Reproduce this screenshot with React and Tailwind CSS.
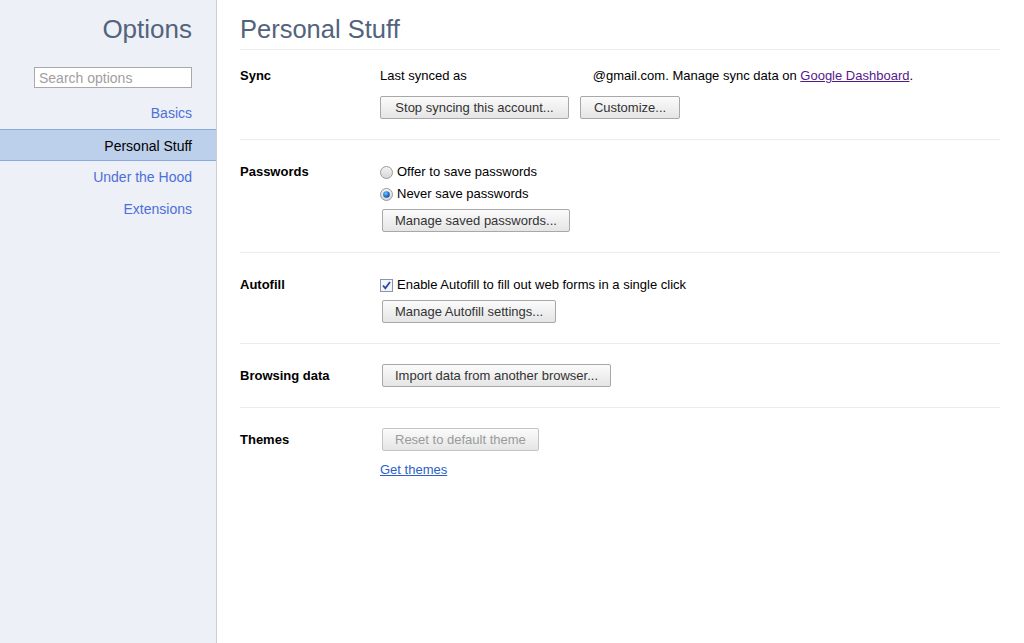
import React from "react";

const Btn = ({ children, disabled, className = "" }) => (
  <button
    className={
      "h-[23px] px-[12px] rounded-[2px] border text-[13px] leading-[21px] whitespace-nowrap bg-gradient-to-b from-[#fbfbfb] to-[#e5e5e5] " +
      (disabled ? "border-[#c4c4c4] text-[#9a9a9a] " : "border-[#a8a8a8] text-[#333] ") +
      className
    }
    style={{ fontFamily: "'Liberation Sans', Arial, sans-serif" }}
  >
    {children}
  </button>
);

const Radio = ({ checked }) => (
  <svg width="13" height="13" viewBox="0 0 13 13" className="shrink-0">
    <defs>
      <linearGradient id={checked ? "rg1" : "rg0"} x1="0" y1="0" x2="0" y2="1">
        <stop offset="0" stopColor="#f4f4f4" />
        <stop offset="1" stopColor="#d6d6d6" />
      </linearGradient>
      <radialGradient id="dot" cx="0.4" cy="0.35" r="0.7">
        <stop offset="0" stopColor="#7fc4ff" />
        <stop offset="0.6" stopColor="#1f74d0" />
        <stop offset="1" stopColor="#0d4a9a" />
      </radialGradient>
    </defs>
    <circle cx="6.5" cy="6.5" r="6" fill={`url(#${checked ? "rg1" : "rg0"})`} stroke="#9a9a9a" strokeWidth="1" />
    {checked && <circle cx="6.5" cy="6.5" r="3.3" fill="url(#dot)" />}
  </svg>
);

const Check = () => (
  <svg width="13" height="13" viewBox="0 0 13 13" className="shrink-0">
    <rect x="0.5" y="0.5" width="12" height="12" fill="#f3f5f8" stroke="#8b97a8" />
    <path d="M3 6.5 L5.3 9.2 L10 3" fill="none" stroke="#2b4aa6" strokeWidth="1.8" />
  </svg>
);

const Section = ({ label, children, pt = "pt-[20px]", border = true }) => (
  <div className={"flex pb-[20px] " + pt + (border ? " border-b border-[#ececec]" : "")}>
    <div className="w-[140px] shrink-0 font-bold text-[13px] pt-[1px] leading-[22px] text-black">{label}</div>
    <div className="flex flex-col">{children}</div>
  </div>
);

export default function App() {
  return (
    <div
      className="flex w-[1024px] h-[643px] bg-white text-[13px] text-black overflow-hidden"
      style={{ fontFamily: "'Liberation Sans', Arial, sans-serif" }}
    >
      {/* Sidebar */}
      <div className="w-[217px] shrink-0 bg-[#eef0f7] border-r border-[#c9ced8] flex flex-col">
        <div className="pr-[24px] pt-[12px] text-right text-[26px] leading-[34px] text-[#53637d]">Options</div>
        <div className="flex justify-end pr-[24px] mt-[21px]">
          <div className="w-[158px] h-[21px] border border-[#a9a9a9] bg-white px-[4px] text-[14px] leading-[20px] text-[#a0a0a0]">
            Search options
          </div>
        </div>
        <div className="mt-[9px] flex flex-col text-[14px]">
          <div className="h-[32px] leading-[33px] text-right pr-[24px] text-[#4c6fd8]">Basics</div>
          <div className="h-[32px] leading-[32px] text-right pr-[24px] text-black bg-[#bccfeb] border-y border-[#8aaadf]">
            Personal Stuff
          </div>
          <div className="h-[32px] leading-[33px] text-right pr-[24px] text-[#4c6fd8]">Under the Hood</div>
          <div className="h-[32px] leading-[33px] text-right pr-[24px] text-[#4c6fd8]">Extensions</div>
        </div>
      </div>

      {/* Main */}
      <div className="flex-1 pl-[23px] pr-[24px]">
        <div className="pt-[12px] pb-[3px] text-[25.5px] leading-[34px] text-[#53637d] border-b border-[#ececec]">
          Personal Stuff
        </div>

        <Section label="Sync" pt="pt-[14px]">
          <div className="pt-[1px] leading-[22px] whitespace-nowrap">
            Last synced as<span className="inline-block w-[126px]"></span>@gmail.com. Manage sync data on{" "}
            <span className="text-[#551a8b] underline">Google Dashboard</span>.
          </div>
          <div className="flex gap-[11px] mt-[9px]">
            <Btn className="w-[189px]">Stop syncing this account...</Btn>
            <Btn className="w-[100px]">Customize...</Btn>
          </div>
        </Section>

        <Section label="Passwords">
          <div className="flex items-center gap-[4px] h-[22px] pt-[2px]">
            <Radio />
            <span>Offer to save passwords</span>
          </div>
          <div className="flex items-center gap-[4px] h-[22px] pt-[2px]">
            <Radio checked />
            <span>Never save passwords</span>
          </div>
          <div className="mt-[5px] pl-[2px]">
            <Btn>Manage saved passwords...</Btn>
          </div>
        </Section>

        <Section label="Autofill">
          <div className="flex items-center gap-[4px] h-[22px] pt-[2px]">
            <Check />
            <span>Enable Autofill to fill out web forms in a single click</span>
          </div>
          <div className="mt-[5px] pl-[2px]">
            <Btn>Manage Autofill settings...</Btn>
          </div>
        </Section>

        <Section label="Browsing data">
          <div className="pl-[2px]">
            <Btn>Import data from another browser...</Btn>
          </div>
        </Section>

        <Section label="Themes" border={false}>
          <div className="pl-[2px]">
            <Btn disabled>Reset to default theme</Btn>
          </div>
          <div className="mt-[7px] pt-[1px] leading-[22px]">
            <span className="text-[#2c5fc8] underline">Get themes</span>
          </div>
        </Section>
      </div>
    </div>
  );
}
